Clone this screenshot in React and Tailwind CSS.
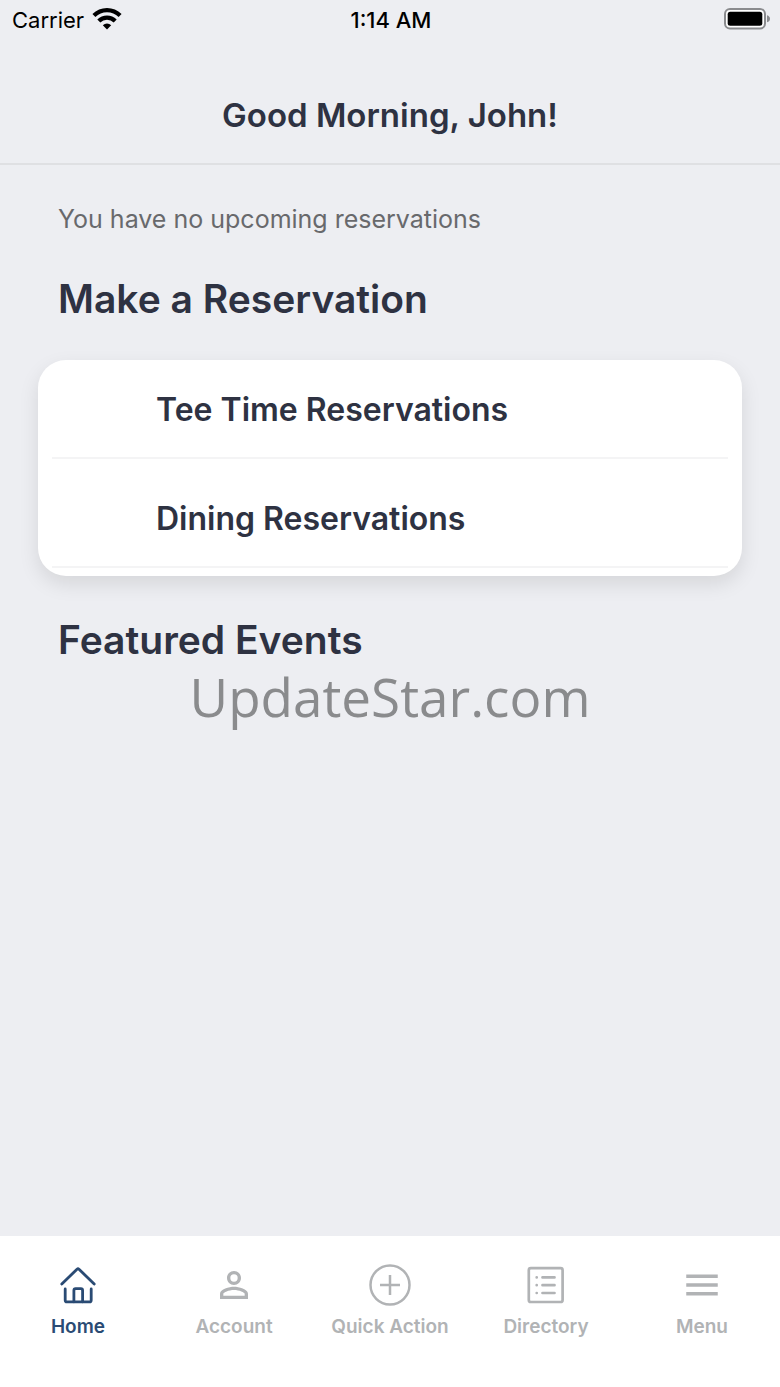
import React, { useState } from "react";
import { MdMenu, MdPersonOutline } from "react-icons/md";

const WifiIcon = () => (
  <svg width="30" height="24" viewBox="0 0 30 24" aria-hidden="true">
    <g fill="none" stroke="#000" strokeWidth="4.2">
      <path d="M1.900 7.600a18.500 18.500 0 0 1 26.200 0" />
      <path d="M6.800 13a11.600 11.600 0 0 1 16.400 0" />
    </g>
    <path d="M15 21.500l-4.200-4.200a6 6 0 0 1 8.400 0z" />
  </svg>
);

const BatteryIcon = () => (
  <svg width="46" height="24" viewBox="0 0 46 24" aria-hidden="true">
    <rect x="1" y="1" width="40" height="19.500" rx="5" fill="#fff" stroke="#8a8b8e" strokeWidth="2" />
    <rect x="3.700" y="3.800" width="34.600" height="14" rx="2.500" />
    <path d="M43 7.300c2 .6 3 1.900 3 3.500s-1 2.900-3 3.500z" fill="#8a8b8e" />
  </svg>
);

const HomeIcon = () => (
  <svg
    width="44"
    height="44"
    viewBox="0 0 44 44"
    fill="none"
    stroke="currentColor"
    strokeWidth="2.800"
    strokeLinecap="round"
    strokeLinejoin="round"
    aria-hidden="true"
  >
    <path d="M5.800 21L21 6.200q1-.9 2 0L38.200 21" />
    <path d="M9.200 26v11.200q0 1.700 1.700 1.700h22.600q1.700 0 1.700-1.700V26" />
    <path d="M17.900 38.800V27.400q0-1.700 1.700-1.700h5.300q1.700 0 1.700 1.700v11.400" />
  </svg>
);

const PlusIcon = () => (
  <svg
    width="44"
    height="44"
    viewBox="0 0 44 44"
    fill="none"
    stroke="currentColor"
    strokeWidth="2.500"
    aria-hidden="true"
  >
    <circle cx="22" cy="22" r="19.500" />
    <path d="M22 12v20M12 22h20" />
  </svg>
);

const DirectoryIcon = () => (
  <svg
    width="44"
    height="44"
    viewBox="0 0 44 44"
    fill="none"
    stroke="currentColor"
    strokeWidth="2.700"
    strokeLinecap="round"
    aria-hidden="true"
  >
    <rect x="4.800" y="5.200" width="33.800" height="33.800" rx="2" />
    <path d="M12.700 14.400h.01M12.700 22.200h.01M12.700 30h.01" />
    <path d="M18.500 14.400h12M18.500 22.200h12M18.500 30h12" />
  </svg>
);

const tabs = [
  { name: "Home", icon: <HomeIcon /> },
  { name: "Account", icon: <MdPersonOutline size={42} /> },
  { name: "Quick Action", icon: <PlusIcon /> },
  { name: "Directory", icon: <DirectoryIcon /> },
  { name: "Menu", icon: <MdMenu size={42} /> },
];

const reservations = ["Tee Time Reservations", "Dining Reservations"];

const App = () => {
  const [active, setActive] = useState("Home");

  return (
    <div className="flex flex-col min-h-screen bg-[#edeef2] text-[#2e3242] font-['Inter',sans-serif]">
      <div className="grid grid-cols-3 items-center h-10 pl-3 pr-2.5 text-black text-[22px]">
        <div className="flex items-center gap-2">
          <span>Carrier</span>
          <WifiIcon />
        </div>
        <div className="text-center font-medium">1:14 AM</div>
        <div className="flex justify-end">
          <BatteryIcon />
        </div>
      </div>

      <header className="pt-12 pb-5 border-b-2 border-[#dfe0e3]">
        <h1 className="text-center text-[33px] leading-[55px] font-semibold">
          Good Morning, John!
        </h1>
      </header>

      <main className="flex-1 px-[38px] pt-9">
        <p className="px-5 text-[25px] leading-9 text-[#68696c]">
          You have no upcoming reservations
        </p>
        <h2 className="px-5 mt-9 text-[39px] leading-[51px] font-semibold">
          Make a Reservation
        </h2>
        <div className="mt-9 px-3.5 pb-2 rounded-[28px] bg-white shadow-[0_8px_20px_rgba(0,0,0,0.10)]">
          {reservations.map((name) => (
            <button
              key={name}
              className="block w-full pl-[104px] pt-[34px] pb-[21px] first:pt-6 text-left text-[32px] leading-[52px] font-semibold border-b-2 border-[#f4f4f5] cursor-pointer"
            >
              {name}
            </button>
          ))}
        </div>
        <h2 className="px-5 mt-[38px] text-[39px] leading-[51px] font-semibold">
          Featured Events
        </h2>
        <p className="text-center text-[53px] leading-[64px] text-[#8a8b8d] font-['Open_Sans',sans-serif]">
          UpdateStar.com
        </p>
      </main>

      <nav className="grid grid-cols-5 pt-[27px] pb-12 bg-white">
        {tabs.map((tab) => (
          <button
            key={tab.name}
            onClick={() => setActive(tab.name)}
            className={`flex flex-col items-center gap-2 text-[19px] leading-6 font-semibold cursor-pointer ${
              active === tab.name ? "text-[#2a4b74]" : "text-[#b1b3b5]"
            }`}
          >
            <span className="flex items-center h-11">{tab.icon}</span>
            {tab.name}
          </button>
        ))}
      </nav>
    </div>
  );
};

export default App;
